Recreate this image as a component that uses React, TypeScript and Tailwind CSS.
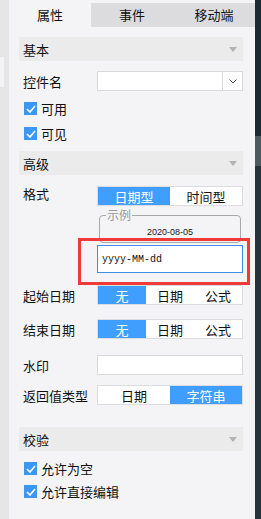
import React from 'react';

const font = { fontFamily: '"Noto Sans CJK SC", "Noto Sans", sans-serif' };

const Caret: React.FC = () => (
  <svg width="8" height="5" viewBox="0 0 8 5" className="mr-[6px]">
    <path d="M0 0 L8 0 L4 5 Z" fill="#b3b3b3" />
  </svg>
);

const SectionHeader: React.FC<{ title: string; className?: string }> = ({ title, className }) => (
  <div className={`flex h-[24px] items-center justify-between bg-[#ebebec] pl-[4px] ${className ?? ''}`}>
    <span className="text-[13px] leading-none text-[#111]">{title}</span>
    <Caret />
  </div>
);

const Check: React.FC<{ label: string; className?: string }> = ({ label, className }) => (
  <div className={`flex h-[13px] items-center pl-[5px] ${className ?? ''}`}>
    <span className="flex h-[13px] w-[13px] items-center justify-center bg-[#3b97f3]">
      <svg width="10" height="8" viewBox="0 0 10 8">
        <path d="M1 4 L4 7 L9 1" stroke="#fff" strokeWidth="1.6" fill="none" />
      </svg>
    </span>
    <span className="ml-[4px] text-[13px] leading-none text-[#111]">{label}</span>
  </div>
);

const Segments: React.FC<{ items: string[]; active: number; cols: string }> = ({ items, active, cols }) => (
  <div className={`grid h-[20px] w-[146px] ${cols} border border-[#dcdde0] bg-white`}>
    {items.map((it, i) => (
      <div
        key={it}
        className={`flex items-center justify-center text-[13px] leading-none ${
          i === active ? 'bg-[#409eff] text-white' : 'text-[#111]'
        }`}
      >
        {it}
      </div>
    ))}
  </div>
);

const Row: React.FC<{ label: string; className?: string; children: React.ReactNode }> = ({ label, className, children }) => (
  <div className={`flex items-center ${className ?? ''}`}>
    <span className="w-[78px] pl-[4px] text-[13px] leading-none text-[#111]">{label}</span>
    {children}
  </div>
);

export default function App() {
  return (
    <div className="flex h-[519px] w-[261px] overflow-hidden bg-[#f4f4f6]" style={font}>
      {/* left edge */}
      <div className="w-[9px] shrink-0 bg-[#e6e6e6] pt-[57px]">
        <div className="h-[30px] w-[4px] bg-[#f3f3f5]" />
      </div>

      {/* panel */}
      <div className="w-[246px] shrink-0 bg-[#f4f4f6] pt-[3px]">
        <div className="grid h-[24px] grid-cols-3 bg-[#dcdcdf] text-[13px] text-[#111]">
          <div className="flex items-center justify-center bg-[#f4f4f6]">属性</div>
          <div className="flex items-center justify-center">事件</div>
          <div className="flex items-center justify-center">移动端</div>
        </div>

        <div className="pl-[10px] pr-[12px]">
          <SectionHeader title="基本" className="mt-[10px]" />

          <Row label="控件名" className="mt-[10px] h-[20px]">
            <div className="flex h-[20px] w-[146px] border border-[#d9d9dc] bg-white">
              <div className="flex-1" />
              <div className="flex w-[20px] items-center justify-center border-l border-[#d9d9dc]">
                <svg width="8" height="5" viewBox="0 0 8 5">
                  <path d="M0.5 0.5 L4 4 L7.5 0.5" stroke="#555" strokeWidth="1" fill="none" />
                </svg>
              </div>
            </div>
          </Row>

          <Check label="可用" className="mt-[11px]" />
          <Check label="可见" className="mt-[12px]" />

          <SectionHeader title="高级" className="mt-[11px]" />

          <div className="mt-[11px] flex items-start">
            <span className="w-[78px] pl-[4px] pt-[1px] text-[13px] leading-none text-[#111]">格式</span>
            <div className="relative w-[146px]">
              <Segments items={['日期型', '时间型']} active={0} cols="grid-cols-2" />
              <fieldset className="mx-[2px] mt-[2px] rounded-[4px] border border-[#a8a8a8] px-[3px] pb-[3px]">
                <legend className="ml-[3px] px-[1px] text-[12px] leading-[14px] text-[#9a9a9a]">示例</legend>
                <div
                  className="pt-[3px] text-center text-[9px] font-medium leading-[14px] text-[#222]"
                  style={{ fontFamily: '"Liberation Sans", sans-serif' }}
                >
                  2020-08-05
                </div>
              </fieldset>
              <div
                className="mt-[2px] flex h-[28px] items-center border border-[#3c8ee6] bg-white pl-[4px] text-[10px] text-[#111]"
                style={{ fontFamily: '"Liberation Mono", monospace' }}
              >
                yyyy-MM-dd
              </div>
              {/* annotation box */}
              <div className="pointer-events-none absolute left-[-19px] top-[52px] h-[47px] w-[172px] border-[3px] border-[#f03a3a]" />
            </div>
          </div>

          <Row label="起始日期" className="mt-[12px]">
            <Segments items={['无', '日期', '公式']} active={0} cols="grid-cols-3" />
          </Row>

          <Row label="结束日期" className="mt-[14px]">
            <Segments items={['无', '日期', '公式']} active={0} cols="grid-cols-3" />
          </Row>

          <Row label="水印" className="mt-[16px]">
            <div className="h-[20px] w-[146px] border border-[#d9d9dc] bg-white" />
          </Row>

          <Row label="返回值类型" className="mt-[10px]">
            <Segments items={['日期', '字符串']} active={1} cols="grid-cols-2" />
          </Row>

          <SectionHeader title="校验" className="mt-[22px]" />

          <Check label="允许为空" className="mt-[11px]" />
          <Check label="允许直接编辑" className="mt-[10px]" />
        </div>
      </div>

      {/* right edge */}
      <div className="flex w-[6px] shrink-0 flex-col bg-[#26333a]">
        <div className="h-[136px] bg-[#1c2a33]" />
        <div className="h-[30px] bg-[#4d5a5f]" />
      </div>
    </div>
  );
}
